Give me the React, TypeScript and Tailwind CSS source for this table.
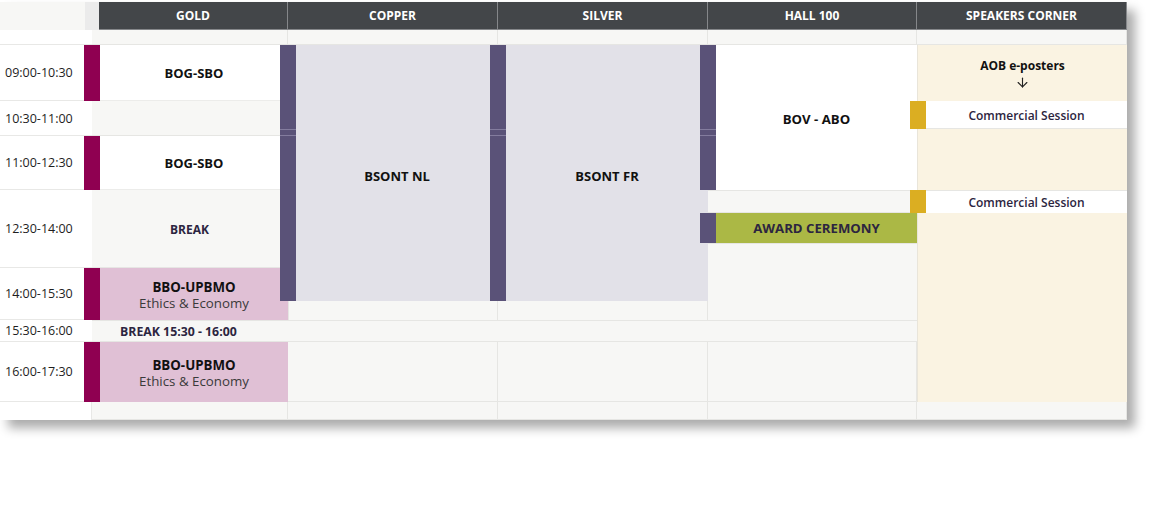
import React from "react";
import { ArrowDown } from "lucide-react";

// colours taken from the schedule
const magenta = "bg-[#8f0051]";
const purple = "bg-[#5a5278]";
const yellow = "bg-[#dbae22]";

function Bar({ color, lines }: { color: string; lines?: boolean }) {
  return (
    <div className={`relative w-[16px] shrink-0 ${color}`}>
      {lines && (
        <>
          <div className="absolute left-0 right-0 top-[84px] h-px bg-[#837c9e]" />
          <div className="absolute left-0 right-0 top-[90px] h-px bg-[#837c9e]" />
        </>
      )}
    </div>
  );
}

function Time({ row, label }: { row: string; label: string }) {
  return (
    <div
      className={`col-start-1 ${row} flex items-center border-b border-[#e8e8e6] bg-white pl-[5px] pt-[2px] text-[12.5px] text-[#1e1e1e]`}
    >
      {label}
    </div>
  );
}

function Empty({ className }: { className: string }) {
  return (
    <div className={`border-b border-r border-[#e6e6e3] bg-[#f7f7f5] ${className}`} />
  );
}

function Pink() {
  return (
    <div className="flex flex-1 flex-col items-center justify-center bg-[#e0c0d5] pt-[2px] leading-[16px]">
      <span className="text-[13.3px] font-bold text-[#111]">BBO-UPBMO</span>
      <span className="text-[13.3px] text-[#3a3a3a]">Ethics &amp; Economy</span>
    </div>
  );
}

export default function App() {
  return (
    <div className="h-[531px] w-[1151px] bg-white font-['Open_Sans',sans-serif]">
      <div className="w-[1127px] pt-[2px]">
        <div className="shadow-[8px_8px_10px_rgba(0,0,0,0.33)]">
          {/* Header */}
          <div className="flex h-[28px]">
            <div className="w-[85px] bg-[#f7f7f5]" />
            <div className="w-[14px] bg-[#ebebeb]" />
            {[
              ["GOLD", "w-[189px]"],
              ["COPPER", "w-[210px]"],
              ["SILVER", "w-[210px]"],
              ["HALL 100", "w-[209px]"],
              ["SPEAKERS CORNER", "w-[210px]"],
            ].map(([name, w]) => (
              <div
                key={name}
                className={`${w} flex items-center justify-center border-b border-r border-[#85878a] bg-[#434649] pt-[1px] text-[12px] font-bold text-white`}
              >
                {name}
              </div>
            ))}
          </div>

          {/* Body */}
          <div className="grid grid-cols-[92px_196px_210px_210px_209px_210px] grid-rows-[15px_56px_35px_54px_78px_52px_22px_60px_18px]">
            {/* time column */}
            <div className="col-start-1 row-start-1 border-b border-[#e8e8e6] bg-white" />
            <Time row="row-start-2" label="09:00-10:30" />
            <Time row="row-start-3" label="10:30-11:00" />
            <Time row="row-start-4" label="11:00-12:30" />
            <Time row="row-start-5" label="12:30-14:00" />
            <Time row="row-start-6" label="14:00-15:30" />
            <Time row="row-start-7" label="15:30-16:00" />
            <Time row="row-start-8" label="16:00-17:30" />
            <div className="col-start-1 row-start-9 border-r border-[#e8e8e6] bg-white" />

            {/* top spacer row */}
            <Empty className="col-start-2 row-start-1" />
            <Empty className="col-start-3 row-start-1" />
            <Empty className="col-start-4 row-start-1" />
            <Empty className="col-start-5 row-start-1" />
            <Empty className="col-start-6 row-start-1" />

            {/* GOLD */}
            <div className="relative z-10 col-start-2 row-start-2 -ml-2 flex">
              <Bar color={magenta} />
              <div className="flex flex-1 items-center justify-center border-b border-[#ececea] bg-white pt-[3px] text-[13px] font-bold text-[#111]">
                BOG-SBO
              </div>
            </div>
            <Empty className="col-start-2 row-start-3" />
            <div className="relative z-10 col-start-2 row-start-4 -ml-2 flex">
              <Bar color={magenta} />
              <div className="flex flex-1 items-center justify-center border-b border-[#ececea] bg-white pt-[3px] text-[13px] font-bold text-[#111]">
                BOG-SBO
              </div>
            </div>
            <div className="col-start-2 row-start-5 flex items-center justify-center border-b border-r border-[#e6e6e3] bg-[#f7f7f5] pt-[2px] text-[12px] font-bold text-[#2c2540]">
              BREAK
            </div>
            <div className="relative z-10 col-start-2 row-start-6 -ml-2 flex">
              <Bar color={magenta} />
              <Pink />
            </div>
            <div className="col-span-4 col-start-2 row-start-7 flex items-center border-b border-t border-[#e6e6e3] bg-[#f7f7f5] pl-[28px] pt-[2px] text-[12.3px] font-bold text-[#2c2540]">
              BREAK 15:30 - 16:00
            </div>
            <div className="relative z-10 col-start-2 row-start-8 -ml-2 flex">
              <Bar color={magenta} />
              <Pink />
            </div>
            <Empty className="col-start-2 row-start-9" />

            {/* COPPER */}
            <div className="relative z-10 col-start-3 row-span-5 row-start-2 flex flex-col">
              <div className="-ml-2 flex h-[256px]">
                <Bar color={purple} lines />
                <div className="flex flex-1 items-center justify-center bg-[#e2e1e8] pt-[7px] text-[13px] font-bold text-[#111]">
                  BSONT NL
                </div>
              </div>
              <div className="flex-1 border-l border-r border-[#e6e6e3] bg-[#f7f7f5]" />
            </div>
            <Empty className="col-start-3 row-start-8" />
            <Empty className="col-start-3 row-start-9" />

            {/* SILVER */}
            <div className="relative z-10 col-start-4 row-span-5 row-start-2 flex flex-col">
              <div className="-ml-2 flex h-[256px]">
                <Bar color={purple} lines />
                <div className="flex flex-1 items-center justify-center bg-[#e2e1e8] pt-[7px] text-[13px] font-bold text-[#111]">
                  BSONT FR
                </div>
              </div>
              <div className="flex-1 border-r border-[#e6e6e3] bg-[#f7f7f5]" />
            </div>
            <Empty className="col-start-4 row-start-8" />
            <Empty className="col-start-4 row-start-9" />

            {/* HALL 100 */}
            <div className="relative z-20 col-start-5 row-span-5 row-start-2 flex flex-col">
              <div className="-ml-2 flex h-[145px]">
                <Bar color={purple} lines />
                <div className="flex flex-1 items-center justify-center bg-white pt-[4px] text-[13.2px] font-bold text-[#111]">
                  BOV - ABO
                </div>
              </div>
              <div className="h-[23px] border-b border-t border-[#e6e6e3] bg-[#f7f7f5]" />
              <div className="-ml-2 flex h-[30px]">
                <Bar color={purple} />
                <div className="flex flex-1 items-center justify-center bg-[#abb845] pt-[2px] text-[13.2px] font-bold text-[#2c2540]">
                  AWARD CEREMONY
                </div>
              </div>
              <div className="flex-1 border-t border-[#e6e6e3] bg-[#f7f7f5]" />
            </div>
            <Empty className="col-start-5 row-start-8" />
            <Empty className="col-start-5 row-start-9" />

            {/* SPEAKERS CORNER */}
            <div className="relative z-30 col-start-6 row-span-7 row-start-2 flex flex-col border-l border-[#e9e5da]">
              <div className="flex h-[56px] flex-col items-center bg-[#faf3e2] pt-[13px] leading-[16px]">
                <span className="text-[12px] font-bold text-[#111]">AOB e-posters</span>
                <ArrowDown size={15} strokeWidth={1.8} className="mt-[1px] text-[#222]" />
              </div>
              <div className="-ml-2 flex h-[28px]">
                <Bar color={yellow} />
                <div className="flex flex-1 items-center justify-center border-b border-[#e6e6e3] bg-white pt-[3px] text-[12px] font-semibold text-[#2c2540]">
                  Commercial Session
                </div>
              </div>
              <div className="h-[61px] bg-[#faf3e2]" />
              <div className="-ml-2 flex h-[23px]">
                <Bar color={yellow} />
                <div className="flex flex-1 items-center justify-center border-t border-[#e6e6e3] bg-white pt-[2px] text-[12px] font-semibold text-[#2c2540]">
                  Commercial Session
                </div>
              </div>
              <div className="flex-1 bg-[#faf3e2]" />
            </div>
            <Empty className="col-start-6 row-start-9" />
          </div>
        </div>
      </div>
    </div>
  );
}
